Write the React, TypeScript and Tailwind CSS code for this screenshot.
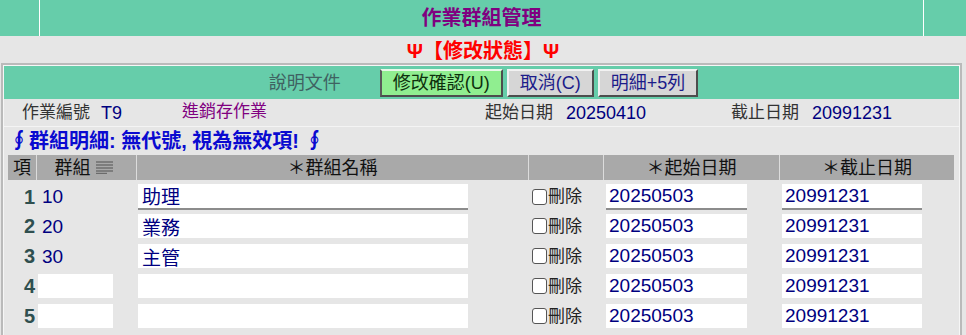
import React from "react";

const rows = [
  { n: 1, code: "10", name: "助理" },
  { n: 2, code: "20", name: "業務" },
  { n: 3, code: "30", name: "主管" },
  { n: 4, code: "", name: "" },
  { n: 5, code: "", name: "" },
];

const ListIcon = () => (
  <svg width="17" height="13" viewBox="0 0 17 13" className="inline-block">
    <g stroke="#6b6b6b" strokeWidth="1.4">
      <line x1="0" y1="1" x2="17" y2="1" />
      <line x1="0" y1="4" x2="17" y2="4" />
      <line x1="0" y1="7" x2="17" y2="7" />
      <line x1="0" y1="10" x2="17" y2="10" />
      <line x1="0" y1="12.5" x2="11" y2="12.5" />
    </g>
  </svg>
);

const Btn = ({ children, green }: { children: React.ReactNode; green?: boolean }) => (
  <button
    className={
      green
        ? "h-[28px] px-[11px] text-[18px] leading-none bg-[#90ee90] text-[#0d300d] border-2 border-t-[#e8f8e8] border-l-[#5a5a5a] border-r-[#4d4d4d] border-b-[#4d4d4d]"
        : "h-[28px] px-[11px] text-[18px] leading-none bg-[#d6d6d6] text-[#1c1c8a] border-2 border-t-[#f2f2f2] border-l-[#f2f2f2] border-r-[#4d4d4d] border-b-[#4d4d4d]"
    }
  >
    {children}
  </button>
);

export default function App() {
  return (
    <div className="w-[966px] h-[335px] overflow-hidden bg-[#e6e6e6] font-['Liberation_Sans','Noto_Sans_CJK_TC',sans-serif]">
      {/* title bar */}
      <div className="flex h-[36px] bg-[#66cdaa]">
        <div className="w-[40px] border-r border-white" />
        <div className="flex-1 flex items-center justify-center text-[20px] font-bold text-[#800080] leading-none">
          作業群組管理
        </div>
        <div className="w-[43px] border-l border-white" />
      </div>

      {/* status */}
      <div className="h-[27px] flex items-center justify-center text-[20px] font-bold text-[#ff0000] leading-none pt-[2px]">
        Ψ【修改狀態】Ψ
      </div>

      {/* main box */}
      <div className="ml-[1px] w-[961px] h-[280px] border-2 border-[#bababa] border-b-0">
        <div className="h-full border border-[#f6f6f6] border-b-0">
          {/* toolbar */}
          <div className="h-[33px] bg-[#66cdaa] flex items-center justify-center pl-[4px]">
            <span className="text-[18px] text-[#3f6262] leading-none mr-[39px]">說明文件</span>
            <div className="flex gap-[4px] pt-[1px]">
              <Btn green>修改確認(U)</Btn>
              <Btn>取消(C)</Btn>
              <Btn>明細+5列</Btn>
            </div>
          </div>

          {/* info row */}
          <div className="h-[28px] flex items-center border-b border-[#f4f4f4] text-[17px] leading-none">
            <div className="w-[178px] pl-[18px] flex items-center gap-[11px]">
              <span className="text-[#333]">作業編號</span>
              <span className="text-[18px] text-[#000080]">T9</span>
            </div>
            <div className="w-[303px] self-start pt-[4px] text-[#800080]">進銷存作業</div>
            <div className="w-[246px] flex items-center gap-[13px]">
              <span className="text-[#333]">起始日期</span>
              <span className="text-[18px] text-[#000080]">20250410</span>
            </div>
            <div className="flex items-center gap-[13px]">
              <span className="text-[#333]">截止日期</span>
              <span className="text-[18px] text-[#000080]">20991231</span>
            </div>
          </div>

          {/* section title */}
          <div className="h-[28px] flex items-center pl-[5px] text-[20px] font-bold text-[#0a0ad0] leading-none">
            ∮群組明細: 無代號, 視為無效項! ∮
          </div>

          {/* table */}
          <div className="ml-[4px] w-[946px]">
            <div className="flex h-[25px] bg-[#a9a9a9] text-[18px] text-[#111] leading-none">
              <div className="w-[28px] flex items-center justify-center">項</div>
              <div className="w-[100px] border-l border-[#dcdcdc] flex items-center justify-center gap-[5px] pr-[6px]">
                <span>群組</span>
                <ListIcon />
              </div>
              <div className="w-[392px] border-l border-[#dcdcdc] flex items-center justify-center">＊群組名稱</div>
              <div className="w-[75px] border-l border-[#dcdcdc]" />
              <div className="w-[176px] border-l border-[#dcdcdc] flex items-center justify-center">＊起始日期</div>
              <div className="w-[175px] border-l border-[#dcdcdc] flex items-center justify-center">＊截止日期</div>
            </div>

            {rows.map((r) => {
              const first = r.n === 1;
              const inp = first
                ? "h-[26px] border-b-2 border-[#8c8c8c] bg-white text-[#000080] text-[19px] leading-none outline-none"
                : "h-[24px] bg-white text-[#000080] text-[19px] leading-none outline-none";
              return (
                <div key={r.n} className={first ? "flex items-center h-[31px] pt-[2px]" : "flex items-center h-[30px]"}>
                  <div className="w-[28px] text-right pr-[1px] text-[20px] font-bold text-[#2f4f4f] leading-none">{r.n}</div>
                  <div className="w-[100px] flex items-center">
                    {r.code ? (
                      <span className="pl-[6px] text-[19px] text-[#000080] leading-none">{r.code}</span>
                    ) : (
                      <div className="ml-[2px] w-[75px] h-[24px] bg-white" />
                    )}
                  </div>
                  <div className="w-[392px] flex items-center">
                    <input readOnly value={r.name} className={`ml-[2px] w-[330px] px-[4px] ${inp}`} />
                  </div>
                  <div className="w-[75px] flex items-center pl-[4px] gap-[1px]">
                    <span className="w-[15px] h-[16px] rounded-[3px] border border-[#555] bg-white" />
                    <span className="text-[17px] text-[#222] leading-none">刪除</span>
                  </div>
                  <div className="w-[176px] flex items-center">
                    <input readOnly value="20250503" className={`ml-[3px] w-[141px] px-[3px] ${inp}`} />
                  </div>
                  <div className="w-[175px] flex items-center">
                    <input readOnly value="20991231" className={`ml-[3px] w-[140px] px-[3px] ${inp}`} />
                  </div>
                </div>
              );
            })}
          </div>
        </div>
      </div>
    </div>
  );
}
